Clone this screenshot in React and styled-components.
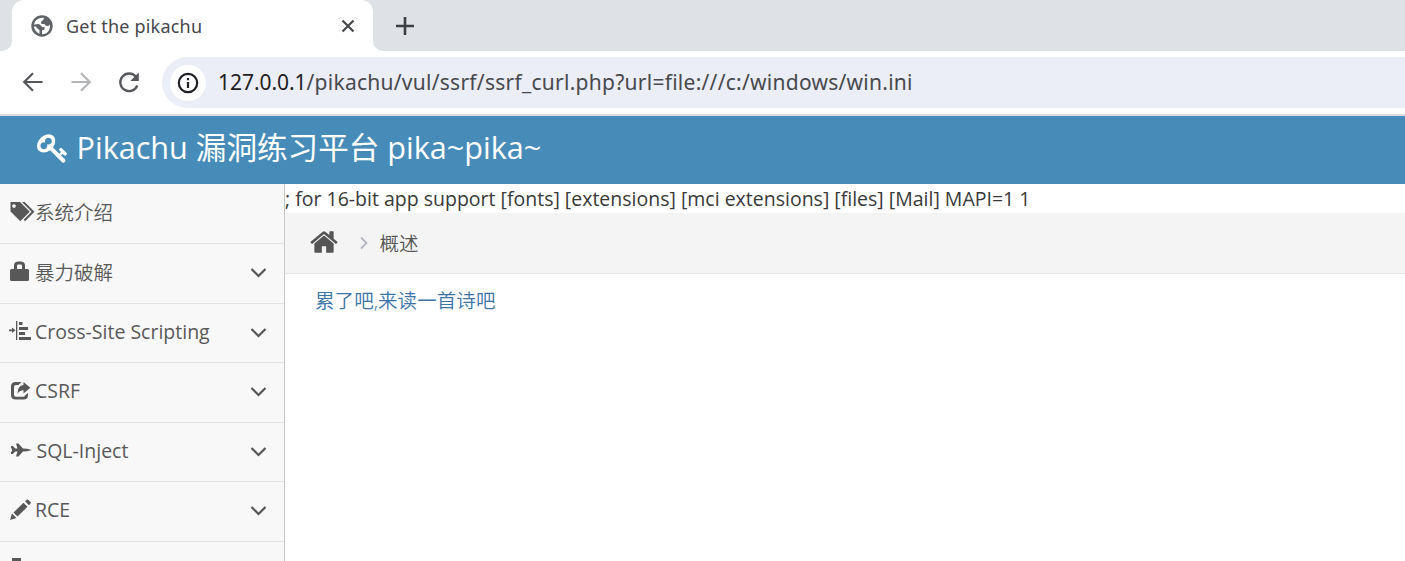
import React from "react";
import styled, { createGlobalStyle } from "styled-components";

const GlobalStyle = createGlobalStyle`
  * { box-sizing: border-box; }
  html, body { margin: 0; padding: 0; overflow: hidden; background: #fff; }
  body { font-family: "Open Sans", "Noto Sans CJK SC", sans-serif; font-size: 19.5px; color: #393939; }
  svg { display: block; flex: none; }
`;

const Page = styled.div`
  height: 561px;
  display: flex;
  flex-direction: column;
  overflow: hidden;
  white-space: nowrap;
`;
const TabStrip = styled.div`
  height: 51px;
  flex: none;
  display: flex;
  background: #dee1e6;
`;
const StripEdge = styled.div`
  width: ${(p) => (p.$fill ? "auto" : "12px")};
  flex: ${(p) => (p.$fill ? 1 : "none")};
  background: #dee1e6;
  border-radius: ${(p) => (p.$fill ? "0 0 0 10px" : "0 0 10px 0")};
  display: flex;
  align-items: center;
  padding-left: ${(p) => (p.$fill ? "23px" : 0)};
`;
const TabBase = styled.div`
  flex: 1;
  display: flex;
  background: #fff;
`;
const TabShoulder = styled.div`
  background: #dee1e6;
`;
const Tab = styled.div`
  width: 361px;
  height: 51px;
  background: #fff;
  border-radius: 12px 12px 0 0;
  display: flex;
  align-items: center;
  padding: 1px 17px 0 19px;
`;
const TabTitle = styled.span`
  font-family: "Noto Sans", sans-serif;
  font-size: 18px;
  letter-spacing: 0.2px;
  color: #45474a;
  margin-left: 13px;
  flex: 1;
`;
const Toolbar = styled.div`
  height: 65px;
  flex: none;
  display: flex;
  align-items: center;
  padding-left: 20px;
  border-bottom: 2px solid #dadce6;
`;
const NavButton = styled.div`
  width: 26px;
  margin-right: 22px;
  color: ${(p) => (p.$dim ? "#b4b5b7" : "#55575a")};
`;
const AddressBar = styled.div`
  flex: 1;
  height: 51px;
  margin-left: -2px;
  border-radius: 26px 0 0 26px;
  background: #ebedf7;
  display: flex;
  align-items: center;
  padding-left: 8px;
`;
const SiteInfo = styled.div`
  width: 36px;
  height: 36px;
  border-radius: 50%;
  background: #fff;
  display: grid;
  place-items: center;
`;
const Url = styled.span`
  font-family: "Noto Sans", sans-serif;
  font-size: 21px;
  letter-spacing: 0.26px;
  margin-left: 12px;
  padding-bottom: 1px;
  color: #47494d;
`;
const Host = styled.span`
  color: #1f2023;
  letter-spacing: -0.05px;
`;
const Navbar = styled.header`
  height: 68px;
  flex: none;
  display: flex;
  align-items: center;
  padding: 0 0 4px 37px;
  background: #478cb8;
  color: #fff;
  font-size: 30.6px;
`;
const Brand = styled.span`
  margin-left: 7.5px;
  padding-bottom: 5px;
`;
const Body = styled.div`
  flex: 1;
  display: flex;
  min-height: 0;
`;
const Sidebar = styled.nav`
  width: 285px;
  flex: none;
  padding-top: 0.5px;
  background: #f8f8f8;
  border-right: 1px solid #c8c8c8;
  overflow: hidden;
`;
const MenuItem = styled.div`
  height: 59.5px;
  display: flex;
  align-items: center;
  padding: 0 17px 3px 9px;
  border-bottom: 1px solid #e2e2e2;
  color: #585858;
`;
const MenuIcon = styled.span`
  width: ${(p) => (p.$wide ? "27.5px" : "26px")};
`;
const MenuLabel = styled.span`
  flex: 1;
  font-weight: ${(p) => (p.$light ? 350 : 400)};
  padding-bottom: ${(p) => (p.$light ? "1px" : 0)};
`;
const ExpandSlot = styled.span`
  padding-top: 3px;
`;
const Main = styled.main`
  flex: 1;
  min-width: 0;
`;
const Output = styled.div`
  height: 29px;
  line-height: 29px;
`;
const Breadcrumbs = styled.div`
  height: 61px;
  display: flex;
  align-items: center;
  padding: 0 0 2px 24px;
  background: #f4f4f4;
  border-bottom: 1px solid #e5e5e5;
  color: #555;
`;
const Crumb = styled.span`
  margin-left: 11.5px;
  font-weight: 350;
`;
const ChevronSlot = styled.span`
  margin-left: 21px;
  padding-top: 2px;
`;
const Poem = styled.a`
  display: block;
  padding: 13px 0 0 30px;
  line-height: 28px;
  color: #3c74a8;
  font-weight: 350;
  letter-spacing: 0.08px;
`;

const Glyph = ({ d, w, h, box = "0 0 1792 1792" }) => (
  <svg width={w} height={h} viewBox={box} fill="currentColor"><path d={d} /></svg>
);

const HOME = "M1472 992v480q0 26-19 45t-45 19h-384v-384h-256v384h-384q-26 0-45-19t-19-45v-480q0-1 .5-3t.5-3l575-474 575 474q1 2 1 6zm223-69l-62 74q-8 9-21 11h-3q-13 0-21-7l-692-577-692 577q-12 8-24 7-13-2-21-11l-62-74q-8-10-7-23.5t11-21.5l719-599q32-26 76-26t76 26l244 204v-195q0-14 9-23t23-9h192q14 0 23 9t9 23v408l219 182q10 8 11 21.5t-7 23.5z";
const KEY = "M832 512q0-80-56-136t-136-56-136 56-56 136q0 42 19 83-41-19-83-19-80 0-136 56t-56 136 56 136 136 56 136-56 56-136q0-42-19-83 41 19 83 19 80 0 136-56t56-136zm851 704q0 17-49 66t-66 49q-9 0-28.5-16t-36.5-33-38.5-40-24.5-26l-96 96 220 220q28 28 28 68 0 42-39 81t-81 39q-40 0-68-28l-671-671q-176 131-365 131-163 0-265.5-102.5t-102.5-265.5q0-160 95-313t248-248 313-95q163 0 265.5 102.5t102.5 265.5q0 189-131 365l355 355 96-96q-3-3-26-24.5t-40-38.5-33-36.5-16-28.5q0-17 49-66t66-49q13 0 23 10 6 6 46 44.5t82 79.5 86.5 86 73 78 28.5 41z";

const Chevron = () => (
  <svg width="17" height="12" viewBox="0 0 17 12" fill="none" stroke="#555" strokeWidth="2.2">
    <path d="M1.5 2l7 7 7-7" />
  </svg>
);

const icons = {
  tags: (
    <svg width="26" height="22" viewBox="0 0 26 22" fill="currentColor">
      <path fillRule="evenodd" d="M1.500 1H11L20.800 10.800 11.300 20.300 1.500 10.500zM5 3.200a1.800 1.800 0 1 0 .01 0z" />
      <path d="M13 1h2.700l9.800 9.800-9.400 9.500-1.500-1.500 8-8z" />
    </svg>
  ),
  lock: (
    <svg width="22" height="22" viewBox="0 0 22 22" fill="currentColor">
      <path fillRule="evenodd" d="M5 8V4.500Q5 .5 9.500 .5h2Q16 .5 16 4.500V8h2.500q1.500 0 1.500 1.500v9q0 1.500-1.500 1.500h-16Q1 20 1 18.500v-9Q1 8 2.500 8zM8 8h5V4.800Q13 3.500 11.500 3.500h-2Q8 3.500 8 4.800z" />
    </svg>
  ),
  indent: (
    <svg width="23" height="20" viewBox="0 0 23 20" fill="currentColor">
      <path d="M0 8.400h3V6.500l3.500 2.800L3 12.100v-1.900H0zM7 0h1.300v19H7zM10 1h3.500v3H10zM10 6h9v3h-9zM10 11h6v3h-6zM10 16h12v3H10z" />
    </svg>
  ),
  share: (
    <svg width="22" height="20" viewBox="0 0 22 20" fill="currentColor">
      <path d="M12.500 1H6.500Q2 1 2 5.500v8.500q0 4.500 4.500 4.500h8q4.500 0 4.500-4.500v-2l-3 2.500q-.2 1.300-1.700 1.300H7Q5 15.800 5 13.800V6q0-2 2-2h2.500z" />
      <path d="M14.500 1l6.800 5.800-6.800 5.700V9.300q-4 0-6 3.500 0-8.200 6-8.700z" />
    </svg>
  ),
  jet: (
    <svg width="24" height="16" viewBox="0 0 24 16" fill="currentColor">
      <path d="M2 4h1.800l2.500 2.600h2.200L7.200 2.200V1.500h2.300l4.500 4.900 4 .3 5 1.300-5 1.300-4 .3-4.500 4.900H7.200v-.7l1.300-4.400H6.300L3.800 12H2V9.400h1V6.600H2z" />
    </svg>
  ),
  pencil: (
    <svg width="22" height="22" viewBox="0 0 22 22" fill="currentColor">
      <path d="M1 21l2-6.500L7.500 19zM4.500 13.500L14.500 3.800l4 4L8.500 17.500zM16 2.300l1.700-1.600q.7-.6 1.400 0l2.400 2.400q.6.700 0 1.400L20 6.200z" />
    </svg>
  ),
  file: (
    <svg width="22" height="22" viewBox="0 0 22 22" fill="currentColor">
      <path d="M3 0h9v3h2l5 5v13H3z" />
    </svg>
  ),
};

const menu = [
  { icon: "tags", label: "系统介绍", light: true },
  { icon: "lock", label: "暴力破解", light: true, open: true },
  { icon: "indent", label: "Cross-Site Scripting", open: true },
  { icon: "share", label: "CSRF", open: true },
  { icon: "jet", label: "SQL-Inject", wide: true, open: true },
  { icon: "pencil", label: "RCE", open: true },
  { icon: "file", label: "" },
];

export default function App() {
  return (
    <Page>
      <GlobalStyle />
      <TabStrip>
        <TabBase>
          <StripEdge />
          <TabShoulder>
            <Tab>
              <svg width="22" height="22" viewBox="0 0 22 22">
                <circle cx="11" cy="11" r="10.700" fill="#5f6368" />
                <path d="M13 2.800Q8 2 5 5.200 3.200 7 2.800 10H8q2.500 0 3 2.500h2q0 2.500-2 2.800v3.900q5 0 7.200-4.200Q19.500 12.500 19 9.500q-1 1.700-3 1.500-2.200-.3-2.500-2H10.500Q9.500 7.500 10.500 6.200 12.800 5.500 13 2.800z" fill="#fff" />
                <path d="M2.800 11.500h4.700v2q0 1.500 1.800 1.700v3.700Q4 17.500 2.800 11.500z" fill="#fff" />
                <path d="M3 9.500L8 9l3 3h2.500v2.500L10.500 15.500v4L8.500 19V15L6.500 13.500z" fill="#5f6368" />
              </svg>
              <TabTitle>Get the pikachu</TabTitle>
              <svg width="16" height="16" viewBox="0 0 16 16" stroke="#45474a" strokeWidth="2.200">
                <path d="M2.500 2.500l11 11M13.500 2.500l-11 11" />
              </svg>
            </Tab>
          </TabShoulder>
          <StripEdge $fill>
            <svg width="18" height="18" viewBox="0 0 18 18" stroke="#3c4043" strokeWidth="2.600">
              <path d="M9 0v18M0 9h18" />
            </svg>
          </StripEdge>
        </TabBase>
      </TabStrip>
      <Toolbar>
        <NavButton>
          <svg width="26" height="26" viewBox="0 1 26 26" fill="none" stroke="currentColor" strokeWidth="2.200">
            <path d="M22.500 13H4.500M13 4.200L4.200 13l8.800 8.800" />
          </svg>
        </NavButton>
        <NavButton $dim>
          <svg width="26" height="26" viewBox="0 1 26 26" fill="none" stroke="currentColor" strokeWidth="2.200">
            <path d="M3.500 13h18M13 4.200l8.800 8.800-8.800 8.800" />
          </svg>
        </NavButton>
        <NavButton>
          <svg width="26" height="26" viewBox="0 0 26 26" fill="none" stroke="currentColor" strokeWidth="2.300">
            <path d="M20 6.800A8.800 8.800 0 1 0 21.300 15.500" />
            <path d="M22.800 2.500V11H14.300z" fill="currentColor" stroke="none" />
          </svg>
        </NavButton>
        <AddressBar>
          <SiteInfo>
            <svg width="22" height="22" viewBox="0 0 22 22" fill="none" stroke="#1f2023" strokeWidth="2.200">
              <circle cx="11" cy="11" r="9.200" />
              <path d="M11 10v6M11 6v2.300" />
            </svg>
          </SiteInfo>
          <Url><Host>127.0.0.1</Host>/pikachu/vul/ssrf/ssrf_curl.php?url=file:///c:/windows/win.ini</Url>
        </AddressBar>
      </Toolbar>
      <Navbar>
        <Glyph d={KEY} w="32" h="32" />
        <Brand>Pikachu 漏洞练习平台 pika~pika~</Brand>
      </Navbar>
      <Body>
        <Sidebar>
          {menu.map((m) => (
            <MenuItem key={m.icon}>
              <MenuIcon $wide={m.wide}>{icons[m.icon]}</MenuIcon>
              <MenuLabel $light={m.light}>{m.label}</MenuLabel>
              {m.open && <ExpandSlot><Chevron /></ExpandSlot>}
            </MenuItem>
          ))}
        </Sidebar>
        <Main>
          <Output>; for 16-bit app support [fonts] [extensions] [mci extensions] [files] [Mail] MAPI=1 1</Output>
          <Breadcrumbs>
            <Glyph d={HOME} w="30" h="30" />
            <ChevronSlot>
              <svg width="8" height="14" viewBox="0 0 8 14" fill="none" stroke="#b2b6bf" strokeWidth="1.800">
                <path d="M1 1.500L6.500 7 1 12.500" />
              </svg>
            </ChevronSlot>
            <Crumb>概述</Crumb>
          </Breadcrumbs>
          <Poem>累了吧,来读一首诗吧</Poem>
        </Main>
      </Body>
    </Page>
  );
}
